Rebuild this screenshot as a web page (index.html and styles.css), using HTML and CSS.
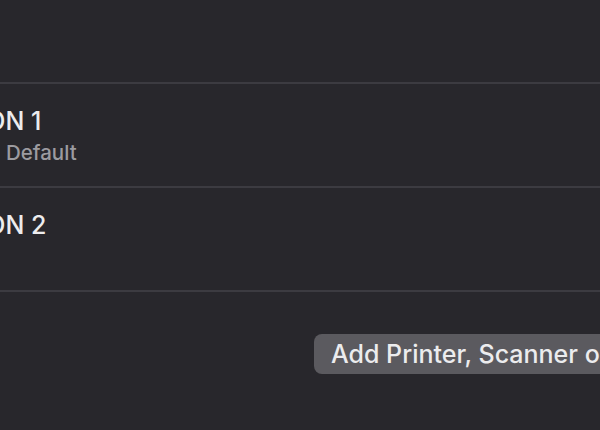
FILE: index.html
```html
<!DOCTYPE html>
<html>
<head>
<meta charset="utf-8">
<link rel="stylesheet" href="styles.css">
</head>
<body>
<div class="panel">
  <div class="top"></div>
  <div class="list">
    <div class="row">
      <div class="info">
        <div class="name">EPSON 1</div>
        <div class="status">Idle, Default</div>
      </div>
    </div>
    <div class="row">
      <div class="info">
        <div class="name">EPSON 2</div>
      </div>
    </div>
  </div>
  <div class="actions">
    <button class="add">Add Printer, Scanner or Fax…</button>
  </div>
</div>
</body>
</html>
```
FILE: styles.css
```css
html, body {
  margin: 0;
  padding: 0;
  background: #28272c;
  width: 600px;
  height: 430px;
  overflow: hidden;
  font-family: Inter, "Noto Sans", sans-serif;
}
.panel {
  display: flex;
  flex-direction: column;
  width: 600px;
}
.top {
  height: 82px;
}
.list {
  border-top: 2px solid #3c3b41;
}
.row {
  height: 102px;
  border-bottom: 2px solid #3c3b41;
  display: flex;
  align-items: flex-start;
}
.info {
  margin-left: -61px;
  padding-top: 22px;
  display: flex;
  flex-direction: column;
  gap: 5px;
}
.name {
  font-size: 25px;
  font-weight: 500;
  line-height: 30px;
  color: #ececee;
  white-space: nowrap;
}
.status {
  padding-left: 20px;
  font-size: 20.5px;
  font-weight: 500;
  line-height: 24px;
  color: #9c9ba0;
  white-space: nowrap;
}
.actions {
  display: flex;
  padding-top: 42px;
  padding-left: 314px;
}
.add {
  height: 40px;
  padding: 0 17px;
  border: none;
  border-radius: 8px;
  background: #5b5a5f;
  color: #ececee;
  font-family: Inter, "Noto Sans", sans-serif;
  font-size: 25px;
  font-weight: 500;
  white-space: nowrap;
  flex-shrink: 0;
}
```
